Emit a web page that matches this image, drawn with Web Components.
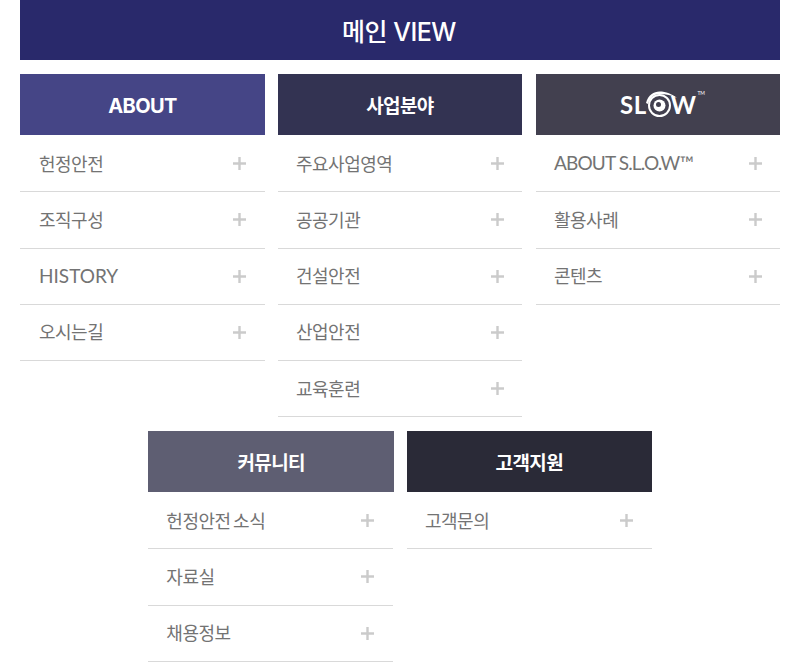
<!DOCTYPE html>
<html lang="ko">
<head>
<meta charset="utf-8">
<title>메인 VIEW</title>
<style>
  html, body { margin:0; background:#fff; }
  body { font-family:"Noto Sans CJK KR","Noto Sans",sans-serif; }
</style>
</head>
<body>
<site-map>
  <map-banner>메인 VIEW</map-banner>
  <map-row>
    <map-col color="#454586" label="ABOUT" style="--head-size:20px;--head-top:2px;--pad-left:19px">
      <map-item>헌정안전</map-item>
      <map-item>조직구성</map-item>
      <map-item latin>HISTORY</map-item>
      <map-item>오시는길</map-item>
    </map-col>
    <map-col color="#333352" label="사업분야" style="--pad-right:18px">
      <map-item>주요사업영역</map-item>
      <map-item>공공기관</map-item>
      <map-item>건설안전</map-item>
      <map-item>산업안전</map-item>
      <map-item>교육훈련</map-item>
    </map-col>
    <map-col color="#42404f" style="--pad-right:18px;margin-left:1px">
      <slow-logo slot="head"></slow-logo>
      <map-item latin style="letter-spacing:-0.85px">ABOUT S.L.O.W™</map-item>
      <map-item>활용사례</map-item>
      <map-item>콘텐츠</map-item>
    </map-col>
  </map-row>
  <map-row class="second">
    <map-col color="#5e5e72" label="커뮤니티" style="--head-over:-1px">
      <map-item>헌정안전 소식</map-item>
      <map-item>자료실</map-item>
      <map-item>채용정보</map-item>
    </map-col>
    <map-col color="#2a2a37" label="고객지원">
      <map-item>고객문의</map-item>
    </map-col>
  </map-row>
</site-map>

<script>
  const define = (name, css, html) => {
    customElements.define(name, class extends HTMLElement {
      constructor() {
        super();
        this.attachShadow({mode:'open'}).innerHTML = `<style>${css}</style>${html}`;
      }
    });
  };

  define('site-map', `
    :host { display:flex; flex-direction:column; width:760px; margin:0 auto; }
  `, `<slot></slot>`);

  define('map-banner', `
    :host {
      display:flex; justify-content:center; align-items:center;
      height:60px; padding-right:2px; background:#29296b; color:#fff;
      font-family:"Inter","Noto Sans CJK KR",sans-serif;
      font-size:25px; font-weight:500; letter-spacing:-0.5px;
    }
  `, `<slot></slot>`);

  define('map-item', `
    :host {
      display:flex; justify-content:space-between; align-items:center;
      height:55.25px; padding:0 var(--pad-right, 19px) 0 var(--pad-left, 18px); border-bottom:1px solid #d9d9d9;
      color:#737373; font-size:18px; letter-spacing:-0.5px; word-spacing:-2px;
    }
    :host([latin]) { font-family:"Lato",sans-serif; font-size:19px; letter-spacing:0; word-spacing:0; }
    span { margin-bottom:2px; }
    svg { display:block; flex:none; }
  `, `<span><slot></slot></span>
    <svg width="13" height="13" viewBox="0 0 13 13"><path d="M6.5 0v13M0 6.5h13" stroke="#cbcbcb" stroke-width="2.4"/></svg>`);

  class MapRow extends HTMLElement {
    constructor() {
      super();
      const second = this.classList.contains('second');
      this.attachShadow({mode:'open'}).innerHTML = `<style>
        :host { display:grid; grid-template-columns:${second ? '244.67px 244.67px' : '245px 244px 245px'};
          column-gap:${second ? 14 : 13}px; justify-content:center; align-items:start;
          margin-top:${second ? 13.75 : 14}px; }
      </style><slot></slot>`;
    }
  }
  customElements.define('map-row', MapRow);

  class MapCol extends HTMLElement {
    constructor() {
      super();
      const shadow = this.attachShadow({mode:'open'});
      shadow.innerHTML = `<style>
        :host { display:block; }
        header {
          display:flex; justify-content:center; align-items:center; box-sizing:border-box; height:61px;
          margin:0 var(--head-over, 0) 1px 0; padding-top:var(--head-top, 0);
          background:${this.getAttribute('color')}; color:#fff;
          font-family:"Inter","Noto Sans CJK KR",sans-serif;
          font-size:var(--head-size, 19px); font-weight:700; letter-spacing:-0.6px;
        }
      </style>
      <header><slot name="head">${this.getAttribute('label') || ''}</slot></header>
      <slot></slot>`;
    }
  }
  customElements.define('map-col', MapCol);

  define('slow-logo', `
    :host {
      display:inline-flex; align-items:center; height:32px; margin-left:9px;
      font-family:"Lato",sans-serif; font-size:24px; font-weight:700; letter-spacing:0.5px; line-height:24px;
    }
    span { margin-top:0; }
    svg { display:block; overflow:visible; margin:0 0 0 1px; }
    sup { align-self:flex-start; margin:1px 0 0 1px; font-size:5px; line-height:6px; letter-spacing:0; font-weight:400; }
  `, `<span>SL</span>
    <svg width="23" height="32" viewBox="0 0 23 32" fill="none" stroke="#fff">
      <path d="M-2 14C0 6 6 2.5 11.5 2.5C18 2.5 24 5 29 9C24 6.5 18 5 11.5 5C6 5 2 9 0 15Z" fill="#fff" stroke="none"/>
      <circle cx="11.5" cy="16.5" r="10.5" stroke-width="2"/>
      <circle cx="11.5" cy="16.5" r="6" fill="#fff" stroke="none"/>
      <circle cx="10.5" cy="15.5" r="2.5" fill="#42404f" stroke="none"/>
    </svg>
    <span>W</span><sup>TM</sup>`);
</script>
</body>
</html>
